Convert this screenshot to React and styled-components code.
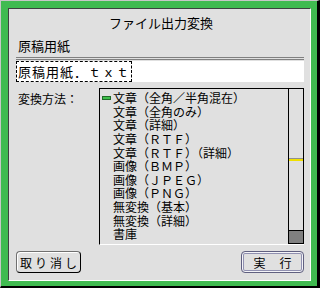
import styled, { createGlobalStyle } from "styled-components";

const Global = createGlobalStyle`
  html, body {
    margin: 0;
    padding: 0;
    background: #000;
  }
  body {
    font-family: "Noto Sans CJK JP", "Noto Sans", sans-serif;
    color: #000;
  }
`;

const Frame = styled.div`
  box-sizing: border-box;
  width: 320px;
  height: 288px;
  display: flex;
  background: #40bb50;
  border-style: solid;
  border-width: 1px 3px 2px 1px;
  border-color: #c8c8c8 #000 #000 #c8c8c8;
  padding: 7px 6px 5px 7px;
`;

const Panel = styled.div`
  flex: 1;
  display: flex;
  flex-direction: column;
  background: #e0e0e0;
  border-style: solid;
  border-width: 1px;
  border-color: #404040 #fff #fff #404040;
  padding: 0 6px 0 7px;
`;

const Title = styled.div`
  height: 27px;
  line-height: 27px;
  font-size: 13px;
  text-align: center;
  padding-left: 2px;
`;

const Label = styled.div`
  margin-top: 2px;
  padding-left: 2px;
  font-size: 13px;
  line-height: 16px;
`;

const Groove = styled.div`
  margin-top: 3px;
  height: 1px;
  border-top: 1px solid #808080;
  border-bottom: 1px solid #808080;
`;

const Field = styled.div`
  margin-top: 1px;
  height: 21px;
  background: #fff;
  display: flex;
`;

const FieldText = styled.span`
  border: 1px dashed #000;
  padding: 0 1px;
  font-size: 13px;
  line-height: 19px;
  letter-spacing: 1px;
`;

const MethodRow = styled.div`
  margin-top: 6px;
  display: flex;
`;

const MethodLabel = styled.div`
  width: 81px;
  padding: 4px 0 0 2px;
  font-size: 12px;
  line-height: 14px;
`;

const ListBox = styled.div`
  flex: 1;
  height: 155px;
  display: flex;
  border-style: solid;
  border-width: 1px 0 1px 1px;
  border-color: #000 #000 #fff #000;
`;

const Items = styled.div`
  flex: 1;
  padding-top: 2px;
`;

const Item = styled.div`
  display: flex;
  align-items: center;
  height: 13.65px;
  line-height: 13.65px;
  font-size: 12px;
  white-space: nowrap;
`;

const MarkSlot = styled.span`
  width: 13px;
  display: flex;
  align-items: center;
`;

const Mark = styled.span`
  box-sizing: border-box;
  margin-left: 2px;
  width: 9px;
  height: 4px;
  background: #3fc04c;
  border: 1px solid #1f6a28;
`;

const Scroll = styled.div`
  width: 14px;
  display: flex;
  flex-direction: column;
  border-left: 1px solid #000;
  border-right: 1px solid #000;
`;

const ScrollMark = styled.div`
  margin-top: 69px;
  height: 2px;
  border-top: 1px solid #909090;
  background: #f0e000;
`;

const ScrollThumb = styled.div`
  margin-top: auto;
  height: 12px;
  background: #808080;
  border-top: 1px solid #000;
  border-bottom: 1px solid #000;
`;

const Buttons = styled.div`
  margin-top: 6px;
  display: flex;
  justify-content: space-between;
`;

const Button = styled.div`
  box-sizing: border-box;
  height: 22px;
  width: ${({ $w }) => $w}px;
  display: flex;
  align-items: center;
  justify-content: center;
  gap: ${({ $gap }) => $gap}px;
  font-size: 12px;
  white-space: nowrap;
  border-radius: 4px;
  border: 1px solid ${({ $primary }) => ($primary ? "#606080" : "#000")};
  border-top-color: ${({ $primary }) => ($primary ? "#606080" : "#707070")};
  border-left-color: ${({ $primary }) => ($primary ? "#606080" : "#707070")};
  box-shadow: ${({ $primary }) =>
    $primary ? "inset 0 0 0 1px #f4f4f8, inset 0 0 0 2px #9090b0" : "inset 1px 1px 0 #fff"};
`;

const items = [
  "文章（全角／半角混在）",
  "文章（全角のみ）",
  "文章（詳細）",
  "文章（ＲＴＦ）",
  "文章（ＲＴＦ）（詳細）",
  "画像（ＢＭＰ）",
  "画像（ＪＰＥＧ）",
  "画像（ＰＮＧ）",
  "無変換（基本）",
  "無変換（詳細）",
  "書庫",
];

export default function App() {
  return (
    <>
      <Global />
      <Frame>
        <Panel>
          <Title>ファイル出力変換</Title>
          <Label>原稿用紙</Label>
          <Groove />
          <Field>
            <FieldText>原稿用紙．ｔｘｔ</FieldText>
          </Field>
          <MethodRow>
            <MethodLabel>変換方法：</MethodLabel>
            <ListBox>
              <Items>
                {items.map((t, i) => (
                  <Item key={i}>
                    <MarkSlot>{i === 0 && <Mark />}</MarkSlot>
                    {t}
                  </Item>
                ))}
              </Items>
              <Scroll>
                <ScrollMark />
                <ScrollThumb />
              </Scroll>
            </ListBox>
          </MethodRow>
          <Buttons>
            <Button $w={65} $gap={3}>
              {"取り消し".split("").map((c) => (
                <span key={c}>{c}</span>
              ))}
            </Button>
            <Button $w={63} $gap={14} $primary>
              <span>実</span>
              <span>行</span>
            </Button>
          </Buttons>
        </Panel>
      </Frame>
    </>
  );
}
